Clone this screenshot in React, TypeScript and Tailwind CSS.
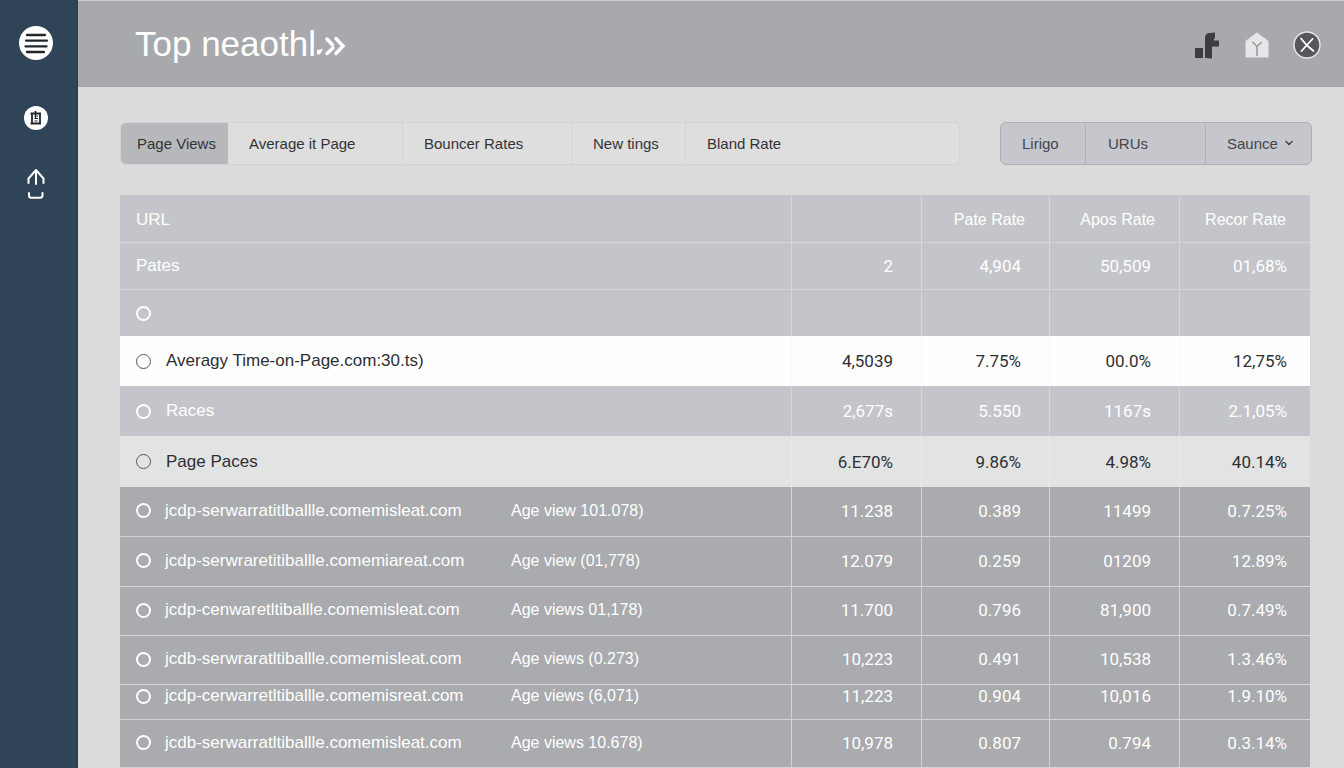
import { useState } from "react"
import { ChevronDown } from "lucide-react"
import clsx from "clsx"

const tabs = [
  { label: "Page Views", className: "w-[107px] pl-4" },
  { label: "Average it Page", className: "w-[174px] pl-[21px]" },
  { label: "Bouncer Rates", className: "w-[169px] pl-[21px]" },
  { label: "New tings", className: "w-[114px] pl-[21px]" },
  { label: "Bland Rate", className: "flex-1 pl-[21px]" },
]

const tones = {
  muted: "bg-[#c4c5ca] text-white border-[#d6d7da]",
  white: "bg-[#fefefe] text-[#2e2f33] border-[#f8f8f9]",
  light: "bg-[#e2e3e3] text-[#2e2f33] border-[#e8e9e9]",
  dark: "bg-[#a9abae] text-white border-[#d3d4d6] pb-0.5",
}

type Row = {
  tone: keyof typeof tones
  height: string
  radio?: boolean
  name: string
  note?: string
  values: string[]
  lined?: boolean
}

const rows: Row[] = [
  { tone: "muted", height: "h-[47px]", name: "Pates", values: ["2", "4,904", "50,509", "01,68%"], lined: true },
  { tone: "muted", height: "h-[46px]", radio: true, name: "", values: ["", "", "", ""] },
  { tone: "white", height: "h-[50px]", radio: true, name: "Averagy Time-on-Page.com:30.ts)", values: ["4,5039", "7.75%", "00.0%", "12,75%"] },
  { tone: "muted", height: "h-[50px]", radio: true, name: "Races", values: ["2,677s", "5.550", "1167s", "2.1,05%"] },
  { tone: "light", height: "h-[51px]", radio: true, name: "Page Paces", values: ["6.E70%", "9.86%", "4.98%", "40.14%"] },
  { tone: "dark", height: "h-[50px]", radio: true, name: "jcdp-serwarratitlballle.comemisleat.com", note: "Age view 101.078)", values: ["11.238", "0.389", "11499", "0.7.25%"], lined: true },
  { tone: "dark", height: "h-[50px]", radio: true, name: "jcdp-serwraretitiballle.comemiareat.com", note: "Age view (01,778)", values: ["12.079", "0.259", "01209", "12.89%"], lined: true },
  { tone: "dark", height: "h-[49px]", radio: true, name: "jcdp-cenwaretltiballle.comemisleat.com", note: "Age views 01,178)", values: ["11.700", "0.796", "81,900", "0.7.49%"], lined: true },
  { tone: "dark", height: "h-[49px]", radio: true, name: "jcdb-serwraratltiballle.comemisleat.com", note: "Age views (0.273)", values: ["10,223", "0.491", "10,538", "1.3.46%"], lined: true },
  { tone: "dark", height: "h-[35px]", radio: true, name: "jcdp-cerwarretltiballle.comemisreat.com", note: "Age views (6,071)", values: ["11,223", "0.904", "10,016", "1.9.10%"], lined: true },
  { tone: "dark", height: "h-[48px]", radio: true, name: "jcdb-serwarratltiballle.comemisleat.com", note: "Age views 10.678)", values: ["10,978", "0.807", "0.794", "0.3.14%"], lined: true },
]

const Sidebar = () => (
  <aside className="w-[78px] shrink-0 bg-[#2f4557] border-r border-[#263b4d] pt-[26px] flex flex-col items-center">
    <nav className="flex flex-col items-center pr-1.5">
      <button aria-label="Menu" className="size-[34px]">
        <svg viewBox="0 0 34 34" className="size-full">
          <circle cx="17" cy="17" r="17" fill="#fff" />
          <path d="M8 9h18M7 14.6h21M6.500 20.400h21M8 26h17" stroke="#22262b" strokeWidth="2.300" strokeLinecap="round" />
        </svg>
      </button>
      <button aria-label="Reports" className="mt-[46px] size-6">
        <svg viewBox="0 0 24 24" className="size-full" fill="none" stroke="#22262b">
          <circle cx="12" cy="12" r="12" fill="#fff" stroke="none" />
          <path d="M6.500 7.500h10.500M8 7v11M16 7v11M6.500 17.500h10.500M11.500 5v3" strokeWidth="1.800" />
          <path d="M10.500 10h3.500M10.500 12.500h3.500M10.500 15h3M11.500 8v5" strokeWidth="1.200" />
        </svg>
      </button>
      <button aria-label="Upload" className="mt-[38px] w-[18px] h-8">
        <svg viewBox="0 0 18 32" className="size-full" fill="none" stroke="#fff" strokeWidth="2" strokeLinecap="round" strokeLinejoin="round">
          <path d="M1.500 15v-4.500L9 2l7.500 8.500V15M9 3v13" />
          <path d="M2 25v2.500C2 29 3 29.800 4.500 29.800h8.500c1.500 0 2.500-.8 2.500-2.300V25" />
        </svg>
      </button>
    </nav>
  </aside>
)

const Header = () => (
  <header className="h-[87px] bg-[#a7a9ac] border-t border-[#c9cccf] pl-[57px] pr-[23px] flex items-center justify-between">
    <h1 className="flex items-center text-[35px] leading-10 text-white">
      Top neaothl
      <svg viewBox="0 0 30 24" className="mt-1 w-[30px] h-6" fill="none" stroke="#fff" strokeWidth="3.500">
        <path d="M20 4.500l7 7.500-7 7.500" strokeLinecap="round" />
        <path d="M11 5l5.500 6" strokeLinecap="round" />
        <path d="M17 14l-6 5.500" strokeLinecap="round" />
        <path d="M1 16l6-1-2 3.500-1.500 2H1z" fill="#fff" stroke="none" />
      </svg>
    </h1>
    <div className="flex items-center pt-0.5">
      <button aria-label="Statistics" className="w-6 h-[27px]">
        <svg viewBox="0 0 24 27" className="size-full" fill="#3c3d41">
          <path d="M0 16h8v10H0z" />
          <path d="M10 26V6c0-4 2.500-5 5-5l5-.500v4.500l-1.500 3.500H24v6h-7v12z" />
        </svg>
      </button>
      <button aria-label="Home" className="ml-[26px] w-6 h-[26px]">
        <svg viewBox="0 0 24 26" className="size-full">
          <path d="M12 .5L23.500 9v15.500c0 .6-.4 1-1 1h-21c-.6 0-1-.4-1-1V9z" fill="#e6e7e8" />
          <path d="M7.500 10l4.500 4.500 4.500-4.500M12 14.500V24" fill="none" stroke="#96989b" strokeWidth="1.500" />
        </svg>
      </button>
      <button aria-label="Close" className="ml-6 size-7">
        <svg viewBox="0 0 28 28" className="size-full">
          <circle cx="14" cy="14" r="13" fill="#55575b" stroke="#e4e5e6" strokeWidth="1.500" />
          <path d="M8 7.500l6 7 6.500 5.500M19.500 8l-6 6.500L8.500 20" fill="none" stroke="#fff" strokeWidth="1.800" strokeLinecap="round" />
        </svg>
      </button>
    </div>
  </header>
)

const Toolbar = () => {
  const [active, setActive] = useState("Page Views")

  return (
    <div className="flex items-center justify-between gap-10 h-[43px] text-[15px] text-[#333438]">
      <div role="tablist" className="flex flex-1 h-full rounded-md border border-[#d2d3d4] bg-[#dedede] overflow-hidden">
        {tabs.map((t, i) => (
          <button
            key={t.label}
            role="tab"
            aria-selected={active === t.label}
            onClick={() => setActive(t.label)}
            className={clsx("pt-0.5 text-left whitespace-nowrap", t.className, active === t.label && "bg-[#b7b8bb]", i > 1 && "border-l border-[#d2d3d4]")}
          >
            {t.label}
          </button>
        ))}
      </div>
      <div className="flex h-full w-[312px] shrink-0 rounded-md border border-[#aeb0b6] bg-[#c5c7cc] overflow-hidden text-[#44464b]">
        <button className="w-[84px] pt-0.5 pl-[21px] text-left">Lirigo</button>
        <button className="flex-1 pt-0.5 pl-[22px] text-left border-l border-[#b0b2b8]">URUs</button>
        <div className="relative flex w-[106px] border-l border-[#b0b2b8]">
          <select aria-label="Saunce" className="w-full appearance-none bg-transparent pt-0.5 pl-[21px]">
            <option>Saunce</option>
          </select>
          <ChevronDown className="pointer-events-none absolute right-4 top-3.5 size-3" strokeWidth={3} />
        </div>
      </div>
    </div>
  )
}

const UrlTable = () => (
  <table className="mt-[30px] w-full table-fixed border-separate border-spacing-0 text-[17px] leading-5">
    <colgroup>
      <col />
      <col className="w-[130px]" />
      <col className="w-[128px]" />
      <col className="w-[130px]" />
      <col className="w-[131px]" />
    </colgroup>
    <thead>
      <tr className="h-12 bg-[#c4c5ca] text-white text-right">
        <th className="border-b border-[#d6d7da] pt-0.5 pl-4 text-left font-normal">URL</th>
        {["", "Pate Rate", "Apos Rate", "Recor Rate"].map((h) => (
          <th key={h} className="border-b border-l border-[#d6d7da] pt-0.5 pr-6 font-normal text-[16px]">{h}</th>
        ))}
      </tr>
    </thead>
    <tbody>
      {rows.map((row, i) => {
        const cell = clsx(tones[row.tone], row.lined && "border-b", row.height === "h-[35px]" && "pb-3")
        return (
          <tr key={i} className={row.height}>
            <td className={clsx(cell, "pl-4")}>
              <label className="flex items-center whitespace-nowrap">
                {row.radio && (
                  <input
                    type="radio"
                    name="url"
                    aria-label={row.name || "Empty row"}
                    className={clsx(
                      "size-[15px] shrink-0 appearance-none rounded-full checked:bg-current",
                      row.note ? "mr-3.5" : "mr-[15px]",
                      row.tone === "white" || row.tone === "light" ? "border border-[#55575b]" : "border-2 border-white",
                    )}
                  />
                )}
                <span className={clsx(row.note && "w-[346px]")}>{row.name}</span>
                {row.note && <span className="text-[16px]">{row.note}</span>}
              </label>
            </td>
            {row.values.map((v, j) => (
              <td key={j} className={clsx(cell, "border-l text-right font-[Roboto,sans-serif]", j === 3 ? "pr-[23px]" : "pr-7")}>{v}</td>
            ))}
          </tr>
        )
      })}
    </tbody>
  </table>
)

export default function App() {
  return (
    <div className="flex min-h-screen bg-[#dbdbdb] font-['Liberation_Sans',Arial,sans-serif]">
      <Sidebar />
      <div className="flex-1 min-w-0">
        <Header />
        <main className="pl-[42px] pr-8 pt-[35px]">
          <Toolbar />
          <div className="pr-0.5">
            <UrlTable />
          </div>
        </main>
      </div>
    </div>
  )
}
